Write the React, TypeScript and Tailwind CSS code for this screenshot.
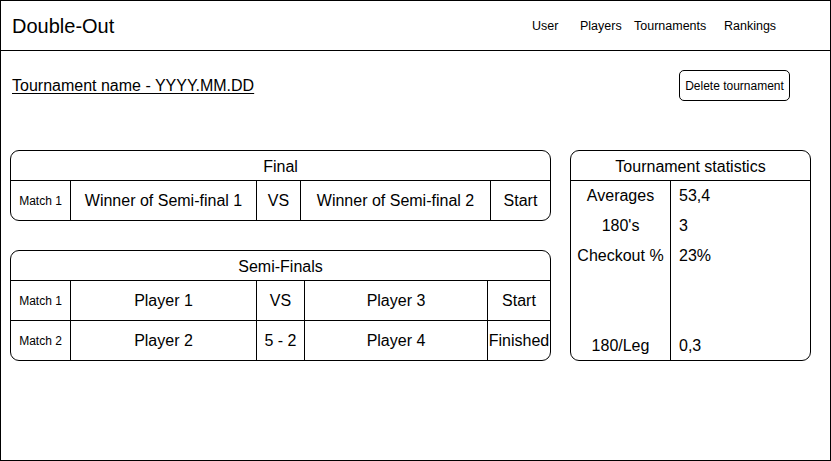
type MatchRow = {
  label: string
  home: string
  mid: string
  away: string
  status: string
}

const finalRows: MatchRow[] = [
  { label: 'Match 1', home: 'Winner of Semi-final 1', mid: 'VS', away: 'Winner of Semi-final 2', status: 'Start' },
]

const semiRows: MatchRow[] = [
  { label: 'Match 1', home: 'Player 1', mid: 'VS', away: 'Player 3', status: 'Start' },
  { label: 'Match 2', home: 'Player 2', mid: '5 - 2', away: 'Player 4', status: 'Finished' },
]

const stats = [
  { label: 'Averages', value: '53,4' },
  { label: "180's", value: '3' },
  { label: 'Checkout %', value: '23%' },
]

type Cols = { home: string; mid: string; away: string; status: string }

function RoundTable({ title, rows, cols }: { title: string; rows: MatchRow[]; cols: Cols }) {
  return (
    <div className="w-[541px] border border-black rounded-[9px] overflow-hidden">
      {/* Round title */}
      <div className="h-[30px] border-b border-black flex justify-center items-start pt-[7px] text-[16px] leading-[18px]">
        {title}
      </div>
      {rows.map((row, i) => (
        <div
          key={row.label}
          className={`flex ${i < rows.length - 1 ? 'h-[40px] border-b border-black' : 'h-[39px]'}`}
        >
          <div className="w-[60px] border-r border-black flex items-center justify-center text-[12px]">
            {row.label}
          </div>
          <div className={`${cols.home} border-r border-black flex items-center justify-center`}>{row.home}</div>
          <div className={`${cols.mid} border-r border-black flex items-center justify-center`}>{row.mid}</div>
          <div className={`${cols.away} border-r border-black flex items-center justify-center`}>{row.away}</div>
          <div className={`${cols.status} flex items-center justify-center`}>{row.status}</div>
        </div>
      ))}
    </div>
  )
}

export default function App() {
  return (
    <div
      className="w-[831px] h-[461px] border border-black bg-white text-black text-[16px]"
      style={{ fontFamily: '"Liberation Sans", Arial, sans-serif' }}
    >
      {/* Top bar */}
      <header className="h-[50px] border-b border-black flex items-center">
        <div className="pl-[11px] text-[20px]">Double-Out</div>
        <nav className="ml-auto pr-[44px] pt-[2px] flex text-[12.5px]">
          <span className="w-[48px]">User</span>
          <span className="w-[54px]">Players</span>
          <span className="w-[90px]">Tournaments</span>
          <span className="w-[62px]">Rankings</span>
        </nav>
      </header>

      {/* Tournament heading */}
      <div className="mt-[19px] h-[31px] flex items-center pl-[11px] pr-[40px]">
        <span className="underline underline-offset-2">Tournament name - YYYY.MM.DD</span>
        <button className="ml-auto w-[111px] h-[31px] border border-black rounded-[5px] text-[12px] bg-white">
          Delete tournament
        </button>
      </div>

      <div className="mt-[49px] ml-[9px] flex items-start">
        <div className="flex flex-col gap-[29px]">
          <RoundTable
            title="Final"
            rows={finalRows}
            cols={{ home: 'w-[186px]', mid: 'w-[44px]', away: 'w-[190px]', status: 'w-[59px]' }}
          />
          <RoundTable
            title="Semi-Finals"
            rows={semiRows}
            cols={{ home: 'w-[186px]', mid: 'w-[48px]', away: 'w-[183px]', status: 'w-[62px]' }}
          />
        </div>

        {/* Statistics */}
        <div className="ml-[19px] w-[241px] h-[211px] border border-black rounded-[9px] overflow-hidden flex flex-col">
          <div className="h-[30px] border-b border-black flex justify-center items-start pt-[7px] leading-[18px]">
            Tournament statistics
          </div>
          <div className="flex-1 flex">
            <div className="w-[100px] border-r border-black flex flex-col">
              {stats.map(s => (
                <div key={s.label} className="h-[30px] flex items-center justify-center">
                  {s.label}
                </div>
              ))}
              <div className="mt-auto h-[30px] flex items-end justify-center pb-[2px]">180/Leg</div>
            </div>
            <div className="flex-1 flex flex-col pl-[8px]">
              {stats.map(s => (
                <div key={s.label} className="h-[30px] flex items-center">
                  {s.value}
                </div>
              ))}
              <div className="mt-auto h-[30px] flex items-end pb-[2px]">0,3</div>
            </div>
          </div>
        </div>
      </div>
    </div>
  )
}
